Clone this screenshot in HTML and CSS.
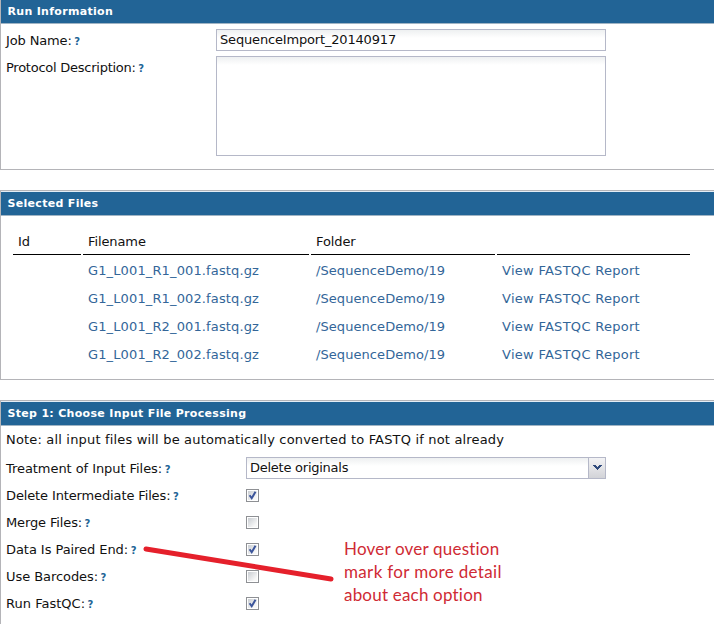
FILE: index.html
```html
<!DOCTYPE html>
<html lang="en">
<head>
<meta charset="utf-8">
<title>Sequence Import</title>
<link rel="stylesheet" href="styles.css">
</head>
<body>
<main class="page">
  <section class="panel panel-first">
    <h2 class="panel-title">Run Information</h2>
    <div class="panel-body run-body">
      <div class="field"><label class="label">Job Name:<span class="help">?</span></label><div class="input name">SequenceImport_20140917</div></div>
      <div class="field field-area"><label class="label tight">Protocol Description:<span class="help">?</span></label><div class="input area"></div></div>
    </div>
  </section>

  <section class="panel">
    <h2 class="panel-title">Selected Files</h2>
    <div class="panel-body files-body">
      <div class="files">
        <div class="th">Id</div><div class="th">Filename</div><div class="th">Folder</div><div class="th"></div>
        <div class="td"></div><a class="td file">G1_L001_R1_001.fastq.gz</a><a class="td folder">/SequenceDemo/19</a><a class="td report">View FASTQC Report</a>
        <div class="td"></div><a class="td file">G1_L001_R1_002.fastq.gz</a><a class="td folder">/SequenceDemo/19</a><a class="td report">View FASTQC Report</a>
        <div class="td"></div><a class="td file">G1_L001_R2_001.fastq.gz</a><a class="td folder">/SequenceDemo/19</a><a class="td report">View FASTQC Report</a>
        <div class="td"></div><a class="td file">G1_L001_R2_002.fastq.gz</a><a class="td folder">/SequenceDemo/19</a><a class="td report">View FASTQC Report</a>
      </div>
    </div>
  </section>

  <section class="panel panel-last">
    <h2 class="panel-title">Step 1: Choose Input File Processing</h2>
    <div class="panel-body step-body">
      <p class="note">Note: all input files will be automatically converted to FASTQ if not already</p>
      <div class="field"><label class="label wide loose">Treatment of Input Files:<span class="help">?</span></label>
        <div class="input combo"><span class="combo-text">Delete originals</span><span class="trigger"><svg width="9" height="6" viewBox="0 0 9 6"><path d="M0 0h3v1h1v1h1v-1h1v-1h3v1h-1v1h-1v1h-1v1h-1v1h-1v-1h-1v-1h-1v-1h-1v-1h-1z" fill="#2f4a7c"/></svg></span></div></div>
      <div class="field"><label class="label wide">Delete Intermediate Files:<span class="help">?</span></label><span class="check"><svg width="13" height="13" viewBox="0 0 13 13"><path d="M3.6 6.2L5.7 9.2L9.5 2.8" fill="none" stroke="#3c559b" stroke-width="2"/></svg></span></div>
      <div class="field"><label class="label wide">Merge Files:<span class="help">?</span></label><span class="check"></span></div>
      <div class="field"><label class="label wide loose">Data Is Paired End:<span class="help">?</span></label><span class="check"><svg width="13" height="13" viewBox="0 0 13 13"><path d="M3.6 6.2L5.7 9.2L9.5 2.8" fill="none" stroke="#3c559b" stroke-width="2"/></svg></span></div>
      <div class="field"><label class="label wide loose">Use Barcodes:<span class="help">?</span></label><span class="check"></span></div>
      <div class="field"><label class="label wide looser">Run FastQC:<span class="help">?</span></label><span class="check"><svg width="13" height="13" viewBox="0 0 13 13"><path d="M3.6 6.2L5.7 9.2L9.5 2.8" fill="none" stroke="#3c559b" stroke-width="2"/></svg></span></div>
    </div>
  </section>

  <svg class="pointer" width="200" height="44" viewBox="140 542 200 44"><path d="M146 549L331 579" stroke="#e5202b" stroke-width="5" stroke-linecap="round"/></svg>
  <div class="callout"><div>Hover over question</div><div class="second">mark for more detail</div><div>about each option</div></div>
</main>
</body>
</html>
```
FILE: styles.css
```css
* { box-sizing: border-box; }
body {
  margin: 0;
  background: #fff;
  color: #111;
  font: 13px/18px "DejaVu Sans", Verdana, sans-serif;
}
.page {
  position: relative;
  width: 714px;
  height: 624px;
  overflow: hidden;
  display: flex;
  flex-direction: column;
  gap: 20px;
}
.panel { border: 1px solid #b4b4b8; border-right: 0; }
.panel-first { border-top: 0; height: 170px; }
.panel:nth-child(2) { height: 190px; }
.panel-last { height: 224px; border-bottom: 0; }
.panel-title {
  margin: 0;
  height: 25px;
  padding: 1px 0 0 6.5px;
  border-top: 1px solid #e4edf5;
  border-bottom: 1px solid #a0b4c4;
  background: #226496;
  color: #fff;
  font-size: 11px;
  font-weight: bold;
  line-height: 22px;
  letter-spacing: 0.31px;
}
.panel-first .panel-title { border-top: 0; height: 24px; }
.run-body { padding: 5px 0 0 5px; display: flex; flex-direction: column; gap: 5px; }
.field { display: flex; align-items: center; height: 22px; white-space: nowrap; }
.field-area { height: 100px; align-items: flex-start; }
.label { width: 210px; padding-top: 2px; letter-spacing: -0.13px; }
.field-area .label { padding-top: 3px; }
.label.wide { width: 240px; }
.label.tight { letter-spacing: -0.25px; }
.label.loose { letter-spacing: -0.06px; }
.label.looser { letter-spacing: 0.02px; }
.help { margin-left: 2.5px; color: #226496; font-size: 10px; font-weight: bold; }
.input {
  width: 390px;
  height: 22px;
  padding: 0 3px;
  border: 1px solid #b5b8c8;
  background: linear-gradient(#eef0f1, #fff 8px);
  line-height: 20px;
}
.name { letter-spacing: -0.17px; }
.area { height: 100px; }
.files-body { padding: 13px 0 0 12px; }
.files {
  display: grid;
  grid-template-columns: 68px 226px 184px 193px;
  grid-template-rows: 26px;
  column-gap: 2px;
  grid-auto-rows: 28px;
  row-gap: 0;
}
.th { border-bottom: 1px solid #000; padding: 4px 5px 0; letter-spacing: -0.1px; }
.td { padding: 7px 5px 0; color: #336699; white-space: nowrap; }
.file { letter-spacing: 0.13px; }
.folder { letter-spacing: 0.07px; }
.report { letter-spacing: 0.28px; }
.note { margin: 0 0 8px; padding-top: 5px; height: 23px; letter-spacing: 0.175px; }
.step-body { padding-left: 5px; }
.step-body .field { margin-bottom: 5px; }
.combo { width: 360px; display: flex; padding-right: 0; justify-content: space-between; }
.combo-text { letter-spacing: -0.25px; }
.trigger {
  width: 17px;
  display: flex;
  justify-content: center;
  padding-top: 7px;
  border-left: 1px solid #b5b8c8;
  background: linear-gradient(#f3f3f5, #d2d3d7);
}
.check {
  width: 13px;
  height: 13px;
  border: 1px solid #8e9094;
  background: linear-gradient(135deg, #c9cdd2, #f8f8f8 80%) content-box #f5f5f5;
  padding: 1px;
  position: relative;
}
.check svg { position: absolute; left: -1px; top: -1px; }
.pointer { position: absolute; left: 140px; top: 542px; }
.callout {
  position: absolute;
  left: 344px;
  top: 537px;
  color: #cf2a34;
  font: 17px/23px Lato, sans-serif;
  font-variant-ligatures: none;
  letter-spacing: 0.2px;
  white-space: nowrap;
}
.callout .second { letter-spacing: 0.34px; }
```
